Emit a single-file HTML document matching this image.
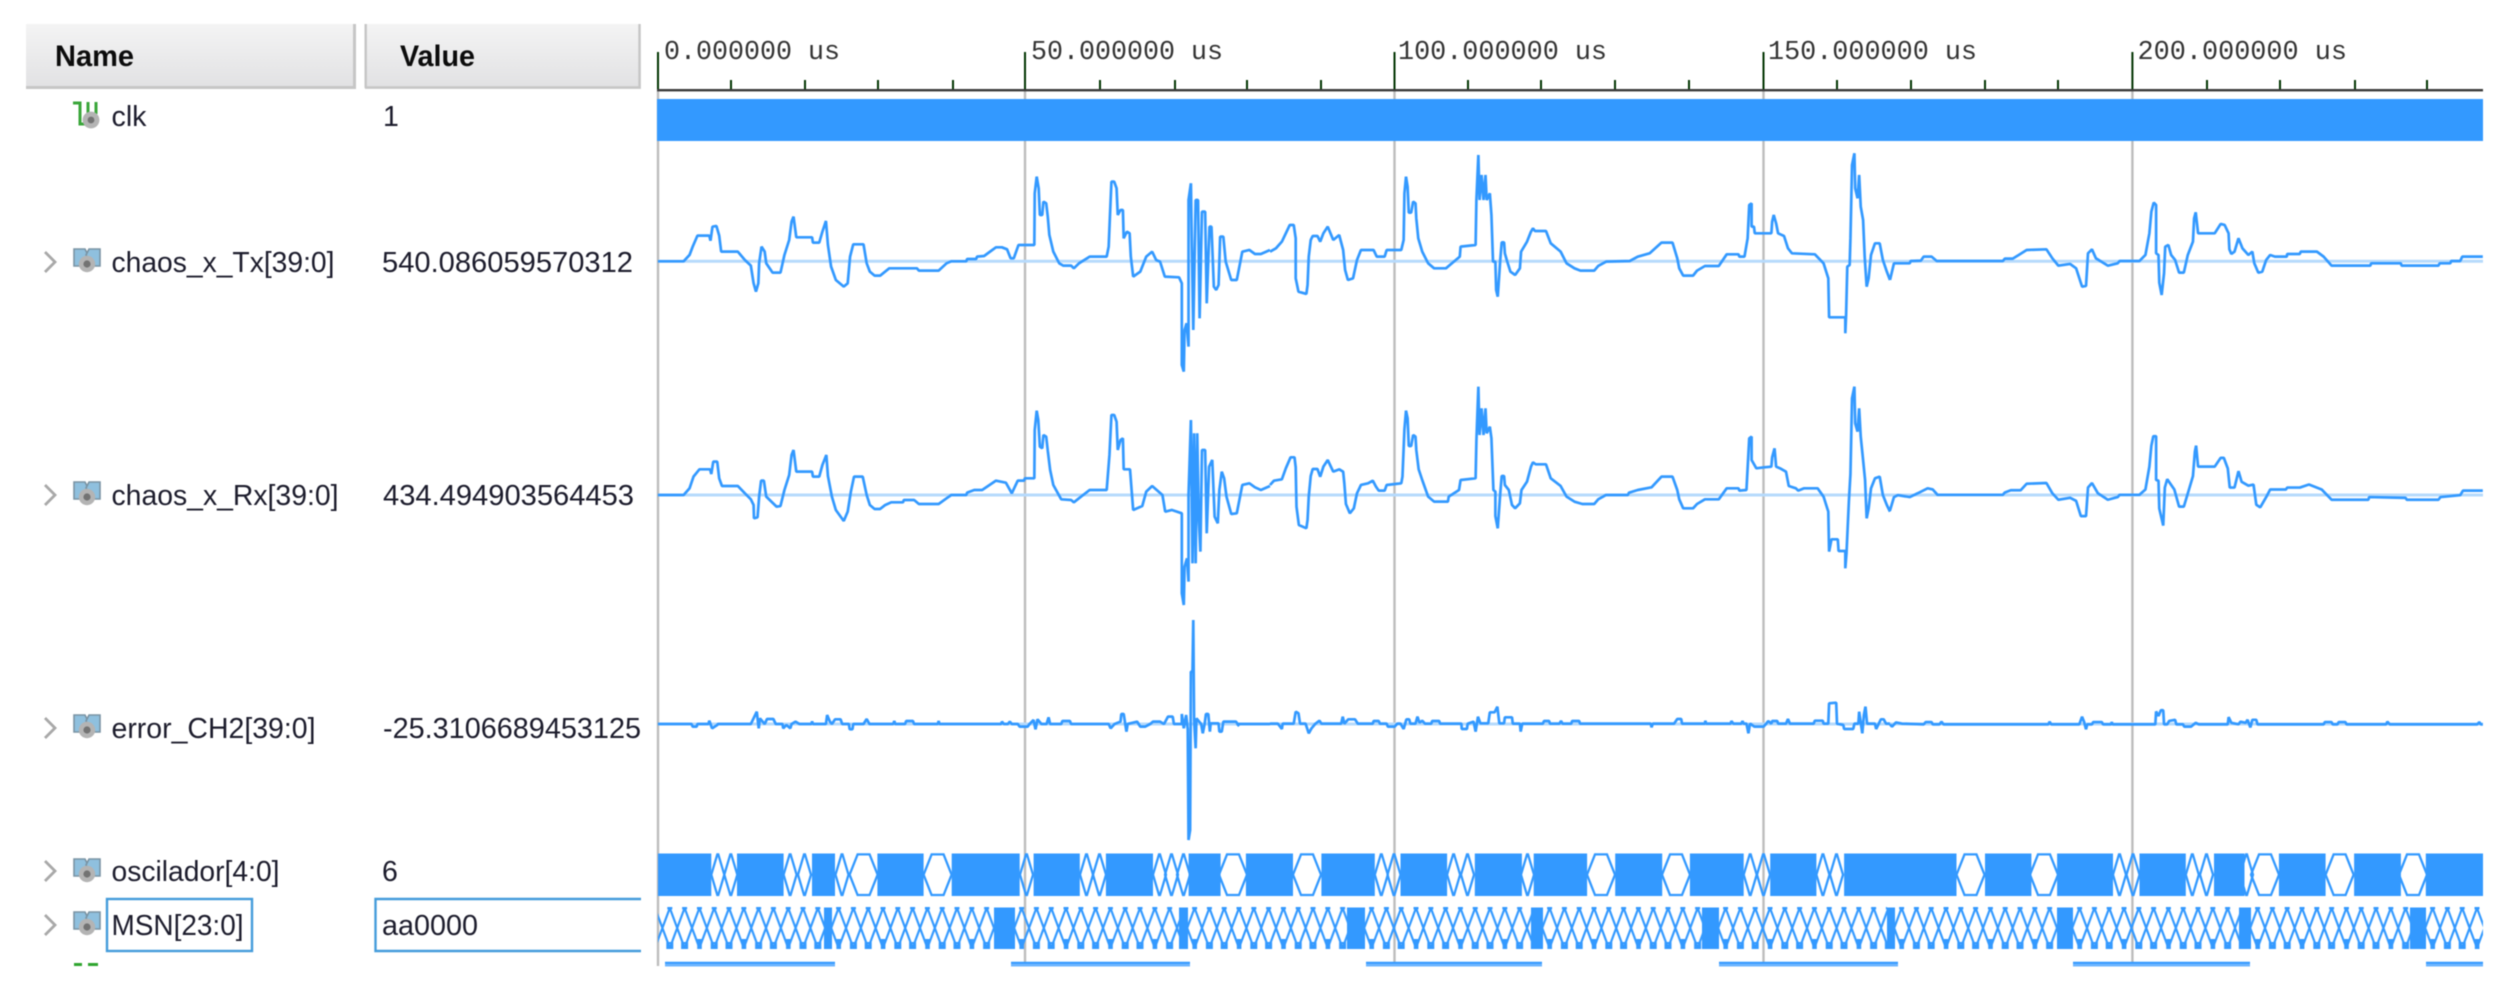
<!DOCTYPE html>
<html lang="en">
<head>
<meta charset="utf-8">
<title>Waveform</title>
<style>
html,body{margin:0;padding:0;background:#fff;width:2511px;height:996px;overflow:hidden}
svg{display:block;filter:blur(.45px)}
text{font-family:"Liberation Sans",sans-serif;fill:#1c1c2c}
.m{font-family:"Liberation Mono",monospace;fill:#333;font-size:26.5px}
.b{font-weight:bold;fill:#0c0c0c;font-size:30px}
.r{font-size:28.5px}
.w polyline{fill:none;stroke:#3399ff;stroke-width:2.7;stroke-linejoin:bevel;vector-effect:non-scaling-stroke}
</style>
</head>
<body>
<svg width="2511" height="996" viewBox="0 0 2511 996" xmlns="http://www.w3.org/2000/svg">
<defs>
<linearGradient id="hd" x1="0" y1="0" x2="0" y2="1"><stop offset="0" stop-color="#f4f4f4"/><stop offset="1" stop-color="#e1e1e3"/></linearGradient>
<g id="bus">
<path d="M1 1H12L15 7 8 18H1Z" fill="#8fc0de" stroke="#7a93a3" stroke-width="1.6"/>
<path d="M27 1H16L13 7 20 18H27Z" fill="#8fc0de" stroke="#7a93a3" stroke-width="1.6"/>
<circle cx="14" cy="16" r="8.2" fill="#b4b4b4"/><circle cx="14" cy="16" r="3.6" fill="#737373"/>
</g>
<path id="chev" d="M0-10L10 0 0 10" fill="none" stroke="#a8a8a8" stroke-width="2.8"/>
<path id="h1" d="M0 0l6-20.3h1l6 20.3-6 20.3h-1z" fill="none" stroke="#3399ff" stroke-width="2.3"/>
<path id="h2" d="M0 0l8-20.3h12l8 20.3-8 20.3h-12z" fill="none" stroke="#3399ff" stroke-width="2.3"/>
<pattern id="msn" patternUnits="userSpaceOnUse" width="44.4" height="42">
<path d="M-10.4 21L-3 1 4.4 21-3 41ZM4.4 21L11.8 1 19.2 21 11.8 41ZM19.2 21L26.6 1 34 21 26.6 41ZM34 21L41.4 1 48.8 21 41.4 41Z" fill="none" stroke="#3399ff" stroke-width="2.2"/>
<path d="M9.3 1.2h5M24.1 1.2h5M38.9 1.2h5" stroke="#3399ff" stroke-width="2.4" fill="none"/>
<rect x="39.2" y="32" width="4.6" height="10" fill="#3399ff"/>
<rect x="9.3" y="36" width="5" height="5" fill="none" stroke="#3399ff" stroke-width="2"/>
<rect x="24.1" y="36" width="5" height="5" fill="none" stroke="#3399ff" stroke-width="2"/>
</pattern>
</defs>

<!-- headers -->
<rect x="26" y="24" width="330" height="65" fill="url(#hd)"/>
<path d="M26 87.5H354.5V24" fill="none" stroke="#c6c6c6" stroke-width="3"/>
<rect x="365" y="24" width="276" height="65" fill="url(#hd)"/>
<path d="M365.7 24V88M365 87.5H639.5V24" fill="none" stroke="#c6c6c6" stroke-width="2.4"/>
<text class="b" x="55" y="66" textLength="79" lengthAdjust="spacingAndGlyphs">Name</text>
<text class="b" x="400" y="66" textLength="75" lengthAdjust="spacingAndGlyphs">Value</text>

<!-- names -->
<g fill="none" stroke="#3aa63a" stroke-width="3"><path d="M73 103H80V124H86M88 102V114M96 102V114"/></g>
<circle cx="91" cy="120" r="8.4" fill="#b4b4b4"/><circle cx="91" cy="120" r="3.4" fill="#737373"/>
<text class="r" x="111.5" y="126" textLength="35" lengthAdjust="spacingAndGlyphs">clk</text>
<text class="r" x="383" y="126">1</text>

<use href="#chev" x="45" y="262"/><use href="#bus" x="73" y="248"/>
<text class="r" x="111.5" y="272" textLength="223" lengthAdjust="spacingAndGlyphs">chaos_x_Tx[39:0]</text>
<text class="r" x="382" y="272" textLength="251" lengthAdjust="spacingAndGlyphs">540.086059570312</text>

<use href="#chev" x="45" y="495"/><use href="#bus" x="73" y="481"/>
<text class="r" x="111.5" y="505" textLength="227" lengthAdjust="spacingAndGlyphs">chaos_x_Rx[39:0]</text>
<text class="r" x="383" y="505" textLength="251" lengthAdjust="spacingAndGlyphs">434.494903564453</text>

<use href="#chev" x="45" y="728"/><use href="#bus" x="73" y="714"/>
<text class="r" x="111.5" y="738" textLength="204" lengthAdjust="spacingAndGlyphs">error_CH2[39:0]</text>
<text class="r" x="383" y="738" textLength="258" lengthAdjust="spacingAndGlyphs">-25.3106689453125</text>

<use href="#chev" x="45" y="871"/><use href="#bus" x="73" y="858"/>
<text class="r" x="111.5" y="881" textLength="168" lengthAdjust="spacingAndGlyphs">oscilador[4:0]</text>
<text class="r" x="382" y="881">6</text>

<use href="#chev" x="45" y="925"/><use href="#bus" x="73" y="911"/>
<rect x="107" y="899" width="145" height="52" fill="none" stroke="#449cdb" stroke-width="2.4"/>
<text class="r" x="111.5" y="935" textLength="132" lengthAdjust="spacingAndGlyphs">MSN[23:0]</text>
<path d="M641 899H375.5V951H641" fill="none" stroke="#449cdb" stroke-width="2.4"/>
<text class="r" x="382" y="935" textLength="96" lengthAdjust="spacingAndGlyphs">aa0000</text>
<path d="M74 964.5h8M88 964.5h10" stroke="#2fa52f" stroke-width="3"/>

<!-- grid -->
<path d="M658 91V966M1025 91V966M1394.5 91V966M1763.5 91V966M2132.4 91V966" stroke="#bcbcbc" stroke-width="2.4" fill="none"/>

<!-- axis -->
<path d="M658 52V90M1025 52V90M1394.5 52V90M1763.5 52V90M2132.4 52V90" stroke="#003300" stroke-width="2" fill="none"/>
<path d="M731 80V90M805 80V90M878 80V90M953 80V90M1100 80V90M1175 80V90M1247 80V90M1321 80V90M1468 80V90M1541 80V90M1615 80V90M1689 80V90M1837 80V90M1911 80V90M1985 80V90M2058 80V90M2207 80V90M2280 80V90M2355 80V90M2427 80V90" stroke="#003300" stroke-width="2" fill="none"/>
<rect x="657" y="89" width="1826" height="2.4" fill="#3a3a3a"/>
<text class="m" x="664" y="59" textLength="176" lengthAdjust="spacingAndGlyphs" xml:space="preserve">0.000000 us</text>
<text class="m" x="1031" y="59" textLength="192" lengthAdjust="spacingAndGlyphs" xml:space="preserve">50.000000 us</text>
<text class="m" x="1398" y="59" textLength="209" lengthAdjust="spacingAndGlyphs" xml:space="preserve">100.000000 us</text>
<text class="m" x="1768" y="59" textLength="209" lengthAdjust="spacingAndGlyphs" xml:space="preserve">150.000000 us</text>
<text class="m" x="2137.5" y="59" textLength="209.5" lengthAdjust="spacingAndGlyphs" xml:space="preserve">200.000000 us</text>

<!-- clk -->
<rect x="657" y="99" width="1826" height="42" fill="#3399ff"/>

<!-- baselines -->
<path d="M658 261.3H2483M658 495H2483M658 724H2483" stroke="#b6dafc" stroke-width="3" fill="none"/>

<g class="w">
<!-- Tx -->
<g transform="translate(650,0) scale(.3954,.3333)"><polyline points="20,784 85,784 100,765 108,740 120,707 150,707 153,722 158,680 168,678 175,707 180,755 222,755 240,780 255,797 262,850 268,875 274,850 276,790 282,740 290,755 294,790 310,818 330,818 340,765 352,720 358,665 363,650 370,712 410,712 412,728 428,728 436,695 445,663 450,735 458,800 470,840 490,860 500,850 506,770 514,733 540,733 548,790 556,815 568,827 582,827 605,805 675,805 680,812 730,812 750,790 762,784 800,784 802,777 825,777 827,770 845,768 860,755 875,742 890,742 903,748 912,775 920,775 932,735 972,735 973,580 978,530 983,565 986,645 992,645 995,605 1002,610 1006,650 1010,705 1020,755 1035,790 1045,797 1065,797 1072,805 1085,790 1112,770 1155,770 1160,740 1163,655 1167,545 1174,545 1180,565 1183,645 1190,630 1196,630 1198,715 1206,695 1213,700 1216,770 1222,830 1240,815 1255,770 1270,755 1280,780 1290,785 1302,830 1338,832 1345,850 1345,1095 1350,1115 1352,990 1357,970 1362,1040 1362,600 1368,550 1370,710 1374,990 1380,600 1386,600 1390,955 1396,635 1404,635 1408,910 1415,680 1420,680 1426,860 1432,870 1438,855 1442,710 1450,710 1456,785 1470,840 1484,840 1498,755 1516,750 1530,762 1545,762 1568,750"/></g>
<g transform="translate(1270,100) scale(.3954,.3333)"><polyline points="0,455 15,445 30,425 50,375 60,375 65,415 65,535 72,575 92,582 95,555 98,470 103,420 108,408 120,408 127,425 135,400 146,380 160,420 175,405 185,450 190,510 197,540 210,535 220,480 230,450 262,450 270,470 290,470 295,450 332,450 338,420 340,280 344,230 348,260 351,338 357,338 362,305 368,310 370,355 375,415 385,455 400,490 415,505 445,505 480,470 482,440 520,435 522,300 527,165 530,300 535,225 540,300 545,225 548,300 556,280 560,345 564,485 570,485 572,570 576,590 582,485 586,427 592,427 594,460 600,485 608,515 620,525 632,505 635,455 650,425 660,395 665,385 670,393 698,393 710,430 735,455 750,490 770,505 785,512 820,512 830,498 850,485 910,483 930,470 960,460 990,428 1018,428 1030,475 1035,505 1045,527 1070,527 1080,512 1100,498 1135,498 1155,463 1185,463 1187,470 1200,470 1208,415 1212,315 1218,310 1218,380 1224,380 1226,400 1268,400 1270,365 1274,345 1280,370 1285,400 1300,408 1310,445 1320,460 1378,463 1400,490 1412,535 1414,652 1455,652 1455,700 1457,645 1460,500 1466,495 1468,415 1472,195 1478,160 1480,265 1486,295 1490,225 1494,320 1500,360 1504,470 1509,560 1514,535 1520,465 1530,430 1542,430 1550,480 1560,515 1568,540"/></g>
<g transform="translate(1890,0) scale(.396,.3333)"><polyline points="0,840 10,790 50,790 52,783 78,782 85,770 105,770 118,783 285,783 290,776 310,776 325,765 345,750 395,748 410,775 425,797 455,792 470,805 485,860 495,858 500,760 510,748 520,775 550,797 575,790 580,783 630,783 645,765 655,700 660,635 666,608 672,615 672,760 678,765 680,848 686,885 692,820 695,740 703,735 710,765 720,780 730,818 742,818 752,765 765,725 768,655 772,637 778,700 820,700 835,672 845,675 855,700 857,748 862,762 870,755 880,715 890,745 905,765 915,755 920,790 930,818 940,815 950,780 960,765 972,770 1002,770 1003,762 1035,762 1037,755 1078,755 1095,770 1115,797 1213,797 1215,790 1290,790 1292,797 1385,797 1388,790 1415,790 1417,783 1440,783 1445,770 1497,770"/></g>
<!-- Rx -->
<g transform="translate(650,380) scale(.3954,.3333)"><polyline points="20,345 85,345 100,325 110,290 125,268 152,268 155,282 160,245 170,245 175,295 182,318 222,318 240,340 255,358 262,375 263,415 272,412 276,350 281,302 288,302 294,350 320,380 330,378 340,330 352,285 358,225 363,210 370,275 410,275 412,290 428,290 436,255 446,225 450,288 460,350 470,390 490,423 500,395 508,335 516,290 538,290 548,345 556,375 568,387 582,387 595,375 610,367 640,367 642,360 668,360 680,372 730,372 750,355 762,345 800,345 802,338 820,330 840,330 855,318 875,302 900,308 915,340 930,302 946,302 948,295 972,295 973,150 978,92 982,120 986,200 992,205 995,165 1002,170 1006,212 1012,270 1020,315 1040,358 1065,360 1072,367 1090,350 1112,330 1155,330 1162,225 1167,105 1174,105 1180,125 1183,210 1190,180 1196,175 1198,268 1214,268 1218,330 1222,390 1245,378 1255,335 1270,318 1296,345 1303,395 1320,390 1345,400 1345,640 1350,675 1352,560 1358,535 1362,605 1362,345 1368,120 1372,550 1376,160 1380,550 1384,160 1388,420 1392,515 1396,210 1404,210 1408,460 1414,260 1422,240 1428,410 1436,430 1440,330 1446,275 1452,295 1458,350 1470,402 1484,400 1498,315 1516,310 1530,322 1545,330 1568,318"/></g>
<g transform="translate(1270,380) scale(.3954,.3333)"><polyline points="0,315 10,302 30,298 40,265 52,232 62,232 65,262 67,380 73,435 92,445 95,420 98,350 103,288 108,267 120,267 127,290 135,260 146,240 160,275 175,268 185,275 188,310 192,372 202,400 212,385 220,340 230,315 248,310 260,302 268,320 275,332 290,332 295,315 332,310 335,290 340,148 344,92 348,115 351,198 357,198 362,165 368,170 370,210 376,268 385,300 400,350 415,365 450,365 452,350 478,330 482,300 520,295 522,182 527,20 530,165 535,85 540,165 545,85 548,160 556,140 560,175 565,330 570,335 570,408 576,445 582,345 586,288 592,288 594,315 604,330 612,375 620,385 632,370 636,330 650,305 660,260 665,247 672,253 698,253 710,295 735,318 750,350 770,365 790,372 820,372 830,358 850,345 905,345 908,338 930,330 965,322 990,290 1018,290 1030,330 1035,358 1045,385 1070,385 1080,372 1100,358 1135,358 1155,325 1185,325 1187,332 1205,330 1212,175 1218,170 1218,240 1230,265 1250,262 1268,260 1270,232 1276,205 1280,260 1290,265 1305,275 1312,318 1330,325 1336,332 1350,325 1385,325 1400,350 1412,395 1414,515 1420,478 1436,478 1438,513 1455,513 1455,565 1458,520 1464,365 1468,282 1472,55 1478,20 1480,130 1486,155 1490,85 1494,170 1500,240 1505,300 1509,415 1514,385 1520,325 1530,295 1542,290 1550,345 1560,375 1568,395"/></g>
<g transform="translate(1890,400) scale(.396,.3807)"><polyline points="0,290 10,255 20,250 50,255 70,245 95,232 108,235 120,249 285,249 290,243 305,237 330,237 345,220 395,218 410,245 425,262 455,257 470,265 482,305 495,305 500,230 510,218 525,245 550,262 575,255 580,249 630,249 645,235 655,175 660,120 665,95 672,95 672,210 678,212 680,285 690,330 694,230 700,208 718,235 730,280 742,280 755,235 765,200 770,135 773,120 778,175 820,175 835,152 843,152 853,180 858,230 870,230 880,187 888,215 905,225 918,222 925,275 935,282 950,255 960,235 1000,235 1003,230 1035,230 1058,222 1090,235 1115,262 1208,262 1210,255 1302,257 1305,262 1385,262 1390,255 1440,250 1447,238 1497,238"/></g>
<!-- error -->
<g transform="translate(650,620) scale(.3954,.3333)"><polyline points="20,312 105,312 108,320 118,320 120,312 148,312 150,302 153,312 157,325 170,315 172,312 255,312 262,295 270,275 275,325 278,295 290,312 296,297 312,297 318,312 335,312 337,325 345,315 355,325 358,312 368,305 378,312 408,312 410,304 412,312 445,312 448,285 455,305 460,312 468,298 482,298 486,312 503,312 505,328 512,328 514,312 540,312 548,297 555,312 615,312 618,303 620,312 645,312 648,303 665,303 668,312 728,312 730,303 732,312 888,312 890,305 895,312 905,312 910,305 915,312 930,312 935,320 955,320 960,312 970,300 975,328 980,298 990,312 1003,312 1008,292 1012,312 1040,312 1043,303 1062,303 1065,312 1160,312 1165,325 1175,312 1190,305 1192,282 1198,282 1205,335 1208,312 1232,305 1240,320 1252,320 1265,312 1272,305 1290,305 1300,312 1310,290 1322,290 1325,312 1345,312 1345,282 1350,325 1356,285 1360,328 1362,660 1366,630 1368,155 1372,155 1374,0 1376,300 1380,385 1382,295 1394,312 1398,340 1403,310 1406,282 1412,282 1416,335 1418,310 1438,310 1440,335 1446,335 1450,305 1482,305 1490,318 1485,312 1568,312"/></g>
<g transform="translate(1270,680) scale(.3954,.3333)"><polyline points="0,131 20,131 30,147 32,131 60,131 65,95 72,100 76,131 90,131 98,160 105,145 115,131 125,122 130,131 180,131 184,110 188,131 198,118 215,118 222,131 260,131 262,123 275,123 278,131 295,131 298,140 315,140 322,131 330,131 338,147 345,118 352,118 355,131 368,131 373,110 378,128 385,122 392,131 408,131 410,123 428,123 430,131 484,131 485,147 498,147 500,131 515,125 520,155 526,110 532,130 552,130 556,97 568,97 575,80 580,130 592,130 594,112 612,112 614,131 632,131 634,155 638,131 690,131 693,123 706,123 708,131 732,131 736,123 740,131 762,131 764,123 782,123 784,131 963,131 965,142 968,131 1022,131 1030,117 1040,117 1042,131 1100,131 1101,122 1103,131 1165,131 1167,123 1172,131 1192,131 1195,123 1198,131 1205,131 1210,160 1214,131 1225,140 1248,140 1255,131 1260,123 1268,131 1270,123 1283,123 1285,131 1305,131 1310,117 1315,131 1375,131 1378,122 1398,122 1400,131 1412,131 1414,70 1432,68 1434,131 1450,135 1452,147 1475,147 1478,131 1488,131 1490,95 1498,160 1502,105 1506,80 1510,131 1530,131 1533,147 1545,118 1552,118 1558,131 1568,131"/></g>
<g transform="translate(1890,400) scale(.396,.3807)"><polyline points="0,852 5,858 15,847 30,850 85,852 90,846 105,846 108,852 125,852 130,845 135,852 400,852 403,845 407,852 478,852 485,832 490,845 495,865 498,852 510,852 513,846 535,846 538,852 558,852 560,846 562,852 670,852 672,818 678,830 684,815 690,815 692,852 700,852 705,843 720,840 723,852 740,852 743,858 760,858 772,848 780,852 853,852 855,833 862,848 880,852 885,845 898,848 903,840 910,860 915,840 925,840 928,852 1095,852 1098,846 1115,846 1118,852 1130,852 1133,846 1150,846 1153,852 1253,852 1256,845 1262,852 1483,852 1488,846 1492,852 1497,852"/></g>
</g>

<!-- oscilador -->
<path fill="#3399ff" d="M658 853.5H711.3V896H658zM737 853.5H783.6V896H737zM812 853.5H835V896H812zM877.4 853.5H923.6V896H877.4zM951.7 853.5H1019.7V896H951.7zM1033.6 853.5H1079.8V896H1033.6zM1105.9 853.5H1153V896H1105.9zM1188.6 853.5H1220.6V896H1188.6zM1245.9 853.5H1293V896H1245.9zM1321.4 853.5H1374.8V896H1321.4zM1400.5 853.5H1447.1V896H1400.5zM1474.8 853.5H1521.9V896H1474.8zM1533.7 853.5H1587.1V896H1533.7zM1615.2 853.5H1662.2V896H1615.2zM1689.9 853.5H1743.7V896H1689.9zM1770.2 853.5H1816.4V896H1770.2zM1844.1 853.5H1956.5V896H1844.1zM1985 853.5H2031.4V896H1985zM2057.1 853.5H2113V896H2057.1zM2139.5 853.5H2185.8V896H2139.5zM2214 853.5H2244.5V896H2214zM2278.9 853.5H2325.6V896H2278.9zM2354.1 853.5H2400.9V896H2354.1zM2425.8 853.5H2483V896H2425.8z"/>
<g>
<use href="#h1" x="711.3" y="874.7"/><use href="#h1" x="724.3" y="874.7"/>
<use href="#h1" x="783.6" y="874.7"/><use href="#h1" x="798" y="874.7"/>
<use href="#h1" x="835.5" y="874.7"/>
<use href="#h1" x="1020" y="874.7"/>
<use href="#h1" x="1080" y="874.7"/><use href="#h1" x="1093" y="874.7"/>
<use href="#h1" x="1153" y="874.7"/><use href="#h1" x="1165" y="874.7"/><use href="#h1" x="1177" y="874.7"/>
<use href="#h1" x="1374.8" y="874.7"/><use href="#h1" x="1387.5" y="874.7"/>
<use href="#h1" x="1447.1" y="874.7"/><use href="#h1" x="1461" y="874.7"/>
<use href="#h1" x="1521" y="874.7"/>
<use href="#h1" x="1743.7" y="874.7"/><use href="#h1" x="1757" y="874.7"/>
<use href="#h1" x="1816.4" y="874.7"/><use href="#h1" x="1830" y="874.7"/>
<use href="#h1" x="2113" y="874.7"/><use href="#h1" x="2126.5" y="874.7"/>
<use href="#h1" x="2185.8" y="874.7"/><use href="#h1" x="2200" y="874.7"/>
<use href="#h1" x="2240" y="874.7"/>
<use href="#h2" x="849.6" y="874.7"/><use href="#h2" x="923.6" y="874.7"/>
<use href="#h2" x="1219" y="874.7"/><use href="#h2" x="1293" y="874.7"/>
<use href="#h2" x="1587" y="874.7"/><use href="#h2" x="1662" y="874.7"/>
<use href="#h2" x="1956.5" y="874.7"/><use href="#h2" x="2030" y="874.7"/>
<use href="#h2" x="2251" y="874.7"/><use href="#h2" x="2325.6" y="874.7"/>
<use href="#h2" x="2399" y="874.7"/>
</g>

<!-- MSN -->
<g fill="url(#msn)">
<rect transform="translate(658,907)" x="0" y="0" width="166" height="42"/>
<rect transform="translate(797.2,907)" x="34.8" y="0" width="162" height="42"/>
<rect transform="translate(980.2,907)" x="34.8" y="0" width="164" height="42"/>
<rect transform="translate(1153.2,907)" x="34.8" y="0" width="159" height="42"/>
<rect transform="translate(1330.2,907)" x="34.8" y="0" width="166" height="42"/>
<rect transform="translate(1508.2,907)" x="34.8" y="0" width="159" height="42"/>
<rect transform="translate(1684.2,907)" x="34.8" y="0" width="168" height="42"/>
<rect transform="translate(1860.2,907)" x="34.8" y="0" width="162" height="42"/>
<rect transform="translate(2038.2,907)" x="34.8" y="0" width="166" height="42"/>
<rect transform="translate(2216.2,907)" x="34.8" y="0" width="159" height="42"/>
<rect transform="translate(2391.2,907)" x="34.8" y="0" width="57" height="42"/>
</g>
<path fill="#3399ff" d="M824 907.5h8V949h-8zM994 907.5h21V949h-21zM1179 907.5h9V949h-9zM1347 907.5h18V949h-18zM1531 907.5h12V949h-12zM1702 907.5h17V949h-17zM1887 907.5h8V949h-8zM2057 907.5h16V949h-16zM2239 907.5h12V949h-12zM2410 907.5h16V949h-16z"/>

<!-- bottom clipped signal -->
<g fill="#6db5ff">
<rect x="665" y="962" width="170" height="4.5"/><rect x="1011" y="962" width="179" height="4.5"/>
<rect x="1366" y="962" width="176" height="4.5"/><rect x="1719" y="962" width="179" height="4.5"/>
<rect x="2073" y="962" width="177" height="4.5"/><rect x="2426" y="962" width="57" height="4.5"/>
</g>
<path d="M665 962.8h170M1011 962.8h179M1366 962.8h176M1719 962.8h179M2073 962.8h177M2426 962.8h57" stroke="#3399ff" stroke-width="2" fill="none"/>
</svg>
</body>
</html>
